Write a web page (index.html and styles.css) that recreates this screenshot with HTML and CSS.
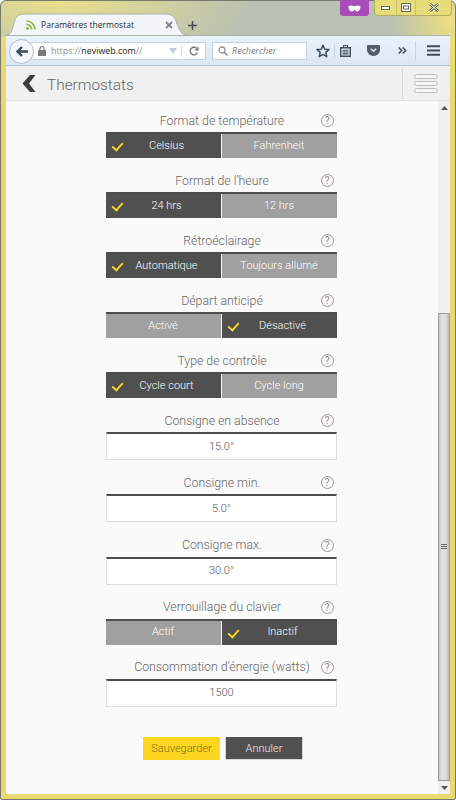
FILE: index.html
```html
<!DOCTYPE html>
<html lang="fr">
<head>
<meta charset="utf-8">
<title>Paramètres thermostat</title>
<link rel="stylesheet" href="styles.css">
</head>
<body>
<div class="window">
  <div class="titlebar">
    <svg class="tab-shape" width="200" height="23" viewBox="0 0 200 23"><path d="M0 22.500C9 22.500 8 15 11 7C12.500 3 15 1 21 1H160C167 1 170 3 172 8C175 16 176 22.500 186 22.500" fill="#f2f6fb" stroke="#a9b3a6"/></svg>
    <div class="tab">
      <svg class="feed" width="10" height="10" viewBox="0 0 10 10"><circle cx="1.500" cy="8.500" r="1.400" fill="#8fb339"/><path d="M0.500 4.500a5 5 0 0 1 5 5M0.500 1a8.500 8.500 0 0 1 8.500 8.500" fill="none" stroke="#8fb339" stroke-width="1.700"/></svg>
      <span class="tab-title">Paramètres thermostat</span>
      <svg class="tab-close" width="8" height="8" viewBox="0 0 8 8"><path d="M1 1l6 6M7 1l-6 6" stroke="#7c8186" stroke-width="1.800"/></svg>
    </div>
    <svg class="newtab" width="9" height="9" viewBox="0 0 9 9"><path d="M4.500 0v9M0 4.500h9" stroke="#444c50" stroke-width="1.500"/></svg>
    <div class="mask">
      <svg width="13" height="7" viewBox="0 0 13 7"><path d="M0.500 1C3 0 5 .5 6.500 1.500C8 .5 10 0 12.500 1C12.500 4 11 6.500 9 6.500C7.500 6.500 7 5 6.500 4.500C6 5 5.500 6.500 4 6.500C2 6.500 .5 4 .5 1Z" fill="#fff"/></svg>
    </div>
    <div class="caption">
      <span class="cap cap-min"><svg width="9" height="4" viewBox="0 0 9 4"><rect x=".5" y=".5" width="8" height="3" fill="#fff" stroke="#66695c"/></svg></span>
      <span class="cap cap-max"><svg width="10" height="9" viewBox="0 0 10 9"><rect x=".5" y=".5" width="9" height="8" fill="#fff" stroke="#66695c"/><rect x="2.500" y="3" width="5" height="3" fill="none" stroke="#66695c"/></svg></span>
      <span class="cap cap-wide"><svg width="10" height="9" viewBox="0 0 10 9"><path d="M1 1l8 7M9 1l-8 7" stroke="#66695c" stroke-width="2.600"/><path d="M1 1l8 7M9 1l-8 7" stroke="#fff" stroke-width="1"/></svg></span>
    </div>
  </div>

  <div class="toolbar">
    <div class="back-circle">
      <svg width="12" height="11" viewBox="0 0 12 11"><path d="M6 1L1.500 5.500L6 10M2 5.500H12" fill="none" stroke="#3d4a57" stroke-width="2.400"/></svg>
    </div>
    <div class="urlbar">
      <svg class="lock" width="8" height="10" viewBox="0 0 8 10"><rect x="0" y="4" width="8" height="6" fill="#7a7a7a"/><path d="M2 4.500V2.500a2 2 0 0 1 4 0V4.500" fill="none" stroke="#7a7a7a" stroke-width="1.200"/></svg>
      <span class="url"><span class="url-dim">https://</span><b class="url-host">neviweb.com</b><span class="url-dim">//</span></span>
      <svg class="drop" width="8" height="6" viewBox="0 0 8 6"><path d="M0 0h8L4 6Z" fill="#c3ccd4"/></svg>
      <span class="url-sep"></span>
      <svg class="reload" width="10" height="10" viewBox="0 0 10 10"><path d="M8.500 6.500A3.800 3.800 0 1 1 7.500 2.200" fill="none" stroke="#6d7680" stroke-width="1.400"/><path d="M9.500 0.500V4.500H5.500Z" fill="#6d7680"/></svg>
    </div>
    <div class="searchbar">
      <svg width="10" height="10" viewBox="0 0 10 10"><circle cx="4" cy="4" r="3" fill="none" stroke="#8a8f94" stroke-width="1.300"/><path d="M6.200 6.200L9.500 9.500" stroke="#8a8f94" stroke-width="1.600"/></svg>
      <span class="search-text">Rechercher</span>
    </div>
    <svg class="t-star" width="14" height="14" viewBox="0 0 14 14"><path d="M7 1.200L8.700 5.200L13 5.600L9.800 8.400L10.800 12.700L7 10.400L3.200 12.700L4.200 8.400L1 5.600L5.300 5.200Z" fill="none" stroke="#3f4d5a" stroke-width="1.500" stroke-linejoin="round"/></svg>
    <span class="t-sep"></span>
    <svg class="t-clip" width="11" height="12" viewBox="0 0 11 12"><path d="M0.700 2.700H10.300V11.300H0.700Z" fill="none" stroke="#3f4d5a" stroke-width="1.400"/><path d="M3.500 .5H7.500V2.500H3.500ZM2.500 5.200H8.500M2.500 7H8.500M2.500 8.900H8.500" fill="none" stroke="#3f4d5a" stroke-width="1.100"/></svg>
    <svg class="t-pocket" width="13" height="11" viewBox="0 0 13 11"><path d="M1 0H12A1 1 0 0 1 13 1V5A6.500 6 0 0 1 0 5V1A1 1 0 0 1 1 0Z" fill="#525e6a"/><path d="M3.800 3.700L6.500 6.200L9.200 3.700" fill="none" stroke="#e3ecf6" stroke-width="1.500"/></svg>
    <svg class="t-more" width="9" height="7" viewBox="0 0 9 7"><path d="M0.700 .5L3.700 3.500L0.700 6.500M4.700 .5L7.700 3.500L4.700 6.500" fill="none" stroke="#3f4d5a" stroke-width="1.500"/></svg>
    <span class="t-sep t-sep-2"></span>
    <svg class="t-burger" width="13" height="11" viewBox="0 0 13 11"><path d="M0 1.300H13M0 5.500H13M0 9.700H13" stroke="#3f4d5a" stroke-width="2"/></svg>
  </div>

  <div class="app-header">
    <svg class="chevron" width="14" height="17" viewBox="0 0 14 17"><path d="M8 0H13.500L7 8.500L13.500 17H8L0.500 8.500Z" fill="#3d3d3d"/></svg>
    <h1 class="app-title">Thermostats</h1>
    <div class="app-menu">
      <span class="menu-bar"></span><span class="menu-bar"></span><span class="menu-bar"></span>
    </div>
  </div>

  <div class="viewport">
    <main class="content">
      <form class="form">
        <section class="field">
          <div class="label"><span>Format de température</span><i class="help">?</i></div>
          <div class="toggle"><span class="opt on">Celsius</span><span class="opt">Fahrenheit</span></div>
        </section>
        <section class="field">
          <div class="label"><span>Format de l'heure</span><i class="help">?</i></div>
          <div class="toggle"><span class="opt on">24 hrs</span><span class="opt">12 hrs</span></div>
        </section>
        <section class="field">
          <div class="label"><span>Rétroéclairage</span><i class="help">?</i></div>
          <div class="toggle"><span class="opt on">Automatique</span><span class="opt">Toujours allumé</span></div>
        </section>
        <section class="field">
          <div class="label"><span>Départ anticipé</span><i class="help">?</i></div>
          <div class="toggle"><span class="opt">Activé</span><span class="opt on">Désactivé</span></div>
        </section>
        <section class="field">
          <div class="label"><span>Type de contrôle</span><i class="help">?</i></div>
          <div class="toggle"><span class="opt on">Cycle court</span><span class="opt">Cycle long</span></div>
        </section>
        <section class="field field-input">
          <div class="label"><span>Consigne en absence</span><i class="help">?</i></div>
          <div class="value">15.0°</div>
        </section>
        <section class="field field-input">
          <div class="label"><span>Consigne min.</span><i class="help">?</i></div>
          <div class="value">5.0°</div>
        </section>
        <section class="field field-input">
          <div class="label"><span>Consigne max.</span><i class="help">?</i></div>
          <div class="value">30.0°</div>
        </section>
        <section class="field">
          <div class="label"><span>Verrouillage du clavier</span><i class="help">?</i></div>
          <div class="toggle"><span class="opt">Actif</span><span class="opt on">Inactif</span></div>
        </section>
        <section class="field field-input">
          <div class="label"><span>Consommation d'énergie (watts)</span><i class="help">?</i></div>
          <div class="value">1500</div>
        </section>
        <div class="actions">
          <button type="button" class="btn btn-save">Sauvegarder</button>
          <button type="button" class="btn btn-cancel">Annuler</button>
        </div>
      </form>
    </main>
    <div class="scrollbar">
      <svg class="arrow" width="7" height="4" viewBox="0 0 7 4"><path d="M3.500 0L7 4H0Z" fill="#555"/></svg>
      <div class="thumb"><span class="grip"></span></div>
      <svg class="arrow" width="7" height="4" viewBox="0 0 7 4"><path d="M0 0H7L3.500 4Z" fill="#555"/></svg>
    </div>
  </div>
</div>
</body>
</html>
```
FILE: styles.css
```css
* { box-sizing: border-box; }
html, body { margin: 0; padding: 0; }
body { width: 456px; height: 800px; overflow: hidden; background: #fff; font-family: Roboto, "Liberation Sans", sans-serif; }

.window {
  width: 456px; height: 800px;
  display: flex; flex-direction: column;
  padding: 0 5px 5px 5px;
  border: 1px solid #77776a;
  border-radius: 6px 6px 2px 2px;
  background:
    radial-gradient(ellipse 190px 70px at 60px 0, #eadf8c 0%, rgba(234,223,140,0) 100%),
    radial-gradient(ellipse 60px 70px at 450px 20px, #eedf80 0%, rgba(238,223,128,0) 100%),
    linear-gradient(#b9c2b2 0, #b9c2b2 35px, #e9d970 36px, #e9d970 100%);
  margin: 0;
}

.titlebar { position: relative; height: 34px; margin: 0 -5px 0 -5px; flex: none; }
.tab-shape { position: absolute; left: 3px; top: 12px; }
.tab { position: absolute; left: 25px; top: 16px; width: 150px; height: 16px; display: flex; align-items: center; }
.tab-title { margin-left: 5px; font: 8.550px/12px "Open Sans", sans-serif; color: #2c2c2c; white-space: nowrap; width: 120px; }
.tab-close { margin-left: 4px; }
.newtab { position: absolute; left: 187px; top: 20px; }
.mask { position: absolute; left: 339px; top: -1px; width: 29px; height: 16px; background: #a84db8; border-radius: 0 0 3px 3px; display: flex; align-items: center; justify-content: center; }
.caption { position: absolute; left: 373px; top: -1px; width: 78px; height: 16px; display: flex; background: #e6dc78; border: 1px solid #b3ab62; border-top: 0; border-radius: 0 0 4px 4px; }
.cap { display: flex; align-items: center; justify-content: center; border-right: 1px solid #c8c06a; }
.cap-min { flex: 0 0 22px; }
.cap-max { flex: 0 0 19px; }
.cap-wide { flex: 1; border-right: 0; }

.toolbar {
  position: relative; height: 31px; flex: none; display: flex; align-items: center;
  background: linear-gradient(#eaf2fb, #dbe7f4);
  border-top: 1px solid #a9b3a6; border-bottom: 1px solid #b4c7da;
}
.back-circle { position: absolute; left: 3px; top: 3px; width: 25px; height: 25px; border-radius: 50%; background: #f3f6fa; border: 1px solid #aebccb; display: flex; align-items: center; justify-content: center; z-index: 1; }
.urlbar { height: 18px; width: 178px; margin-left: 22px; background: #fff; border: 1px solid #c4d2e1; display: flex; align-items: center; padding-left: 9px; flex: none; }
.lock { flex: none; }
.url { margin-left: 5px; font: 8.900px/12px "Open Sans", sans-serif; white-space: nowrap; width: 118px; }
.url-dim { color: #8b8b8b; }
.url-host { font-weight: 400; color: #222; }
.drop { flex: none; }
.url-sep { width: 1px; height: 12px; background: #d5dde5; margin-left: 4px; flex: none; }
.reload { margin-left: 7px; flex: none; }
.searchbar { height: 18px; width: 95px; margin-left: 6px; background: #fff; border: 1px solid #c4d2e1; display: flex; align-items: center; padding-left: 5px; flex: none; }
.search-text { margin-left: 4px; font: italic 9px/12px "Open Sans", sans-serif; color: #777; }
.t-star { margin-left: 9px; flex: none; }
.t-sep { width: 1px; height: 14px; background: #c5d3e2; margin-left: 4px; flex: none; }
.t-clip { margin-left: 5px; flex: none; }
.t-pocket { margin-left: 16px; flex: none; }
.t-more { margin-left: 18px; flex: none; }
.t-sep-2 { height: 20px; margin-left: 8px; }
.t-burger { margin-left: 11px; flex: none; }

.app-header { height: 35px; flex: none; display: flex; align-items: center; background: #f0f0f0; border-bottom: 1px solid #e3e3e3; padding-left: 16px; }
.chevron { flex: none; margin-top: 1px; }
.app-title { margin: 3px 0 0 11px; font: 300 15.400px/20px Roboto, sans-serif; color: #666; flex: 1; }
.app-menu { width: 44px; height: 31px; border-left: 1px solid #dcdcdc; display: flex; flex-direction: column; justify-content: center; gap: 2px; padding-left: 11px; margin-right: 4px; flex: none; }
.menu-bar { display: block; width: 24px; height: 5px; border: 1px solid #bcbcbc; border-radius: 3px; background: #f6f6f6; }

.viewport { flex: 1; min-height: 0; display: flex; background: #fafafa; }
.content { flex: 1; min-width: 0; display: flex; justify-content: center; padding-right: 2px; }
.form { width: 231px; padding-top: 10px; display: flex; flex-direction: column; }

.field { height: 60px; flex: none; display: flex; flex-direction: column; }
.field-input { height: 62.300px; }
.label { position: relative; height: 21px; padding: 0 0 2px 2px; display: flex; align-items: center; justify-content: center; font: 300 12.300px/18px Roboto, sans-serif; color: #666; white-space: nowrap; }
.help { position: absolute; right: 3px; top: 3px; width: 13px; height: 13px; border: 1.500px solid #999; border-radius: 50%; color: #939393; font: 400 11px/11px Roboto, sans-serif; text-align: center; }

.toggle { display: flex; gap: 1px; height: 26px; border-top: 2px solid #4d4d4d; flex: none; }
.opt { position: relative; flex: none; width: 115px; display: flex; align-items: center; justify-content: center; padding-bottom: 2px; font: 300 11px/14px Roboto, sans-serif; color: #fff; background: #a0a0a0; border-top: 1px solid #a0a0a0; }
.opt.on { background: #505050; border-top-color: #505050; padding-left: 7px; }
.opt.on::before { content: ""; position: absolute; left: 6px; top: 7px; width: 9px; height: 5px; border-left: 2px solid #fdd71f; border-bottom: 2px solid #fdd71f; transform: rotate(-48deg) scale(.95); }

.value { height: 28px; flex: none; padding-left: 1px; border: 1px solid #dedede; border-top: 2px solid #4d4d4d; background: #fff; display: flex; align-items: center; justify-content: center; font: 300 11px/14px Roboto, sans-serif; color: #555; }

.actions { margin-top: 17px; display: flex; justify-content: center; gap: 5px; padding-left: 3px; }
.btn { height: 23px; border: 0; padding: 1px 0 0 1px; font: 300 11px/14px Roboto, sans-serif; }
.btn-save { width: 77px; background: #fdd71f; color: #7a6c1c; }
.btn-cancel { width: 78px; background: #505050; color: #eee; border: 1px solid #d8d8d8; border-width: 0 1px 1px 1px; }

.scrollbar { width: 12px; flex: none; display: flex; flex-direction: column; align-items: center; background: #f0f0f0; padding-top: 5px; padding-bottom: 5px; }
.arrow { flex: none; }
.thumb { width: 12px; height: 468px; margin-top: 203px; margin-bottom: 5px; flex: none; background: linear-gradient(90deg, #c9c9c9, #e2e2e2 35%, #dcdcdc 70%, #bcbcbc); border: 1px solid #9d9d9d; display: flex; align-items: center; justify-content: center; }
.grip { display: block; width: 6px; height: 6px; background: repeating-linear-gradient(#666 0 1px, transparent 1px 2px); }
```
